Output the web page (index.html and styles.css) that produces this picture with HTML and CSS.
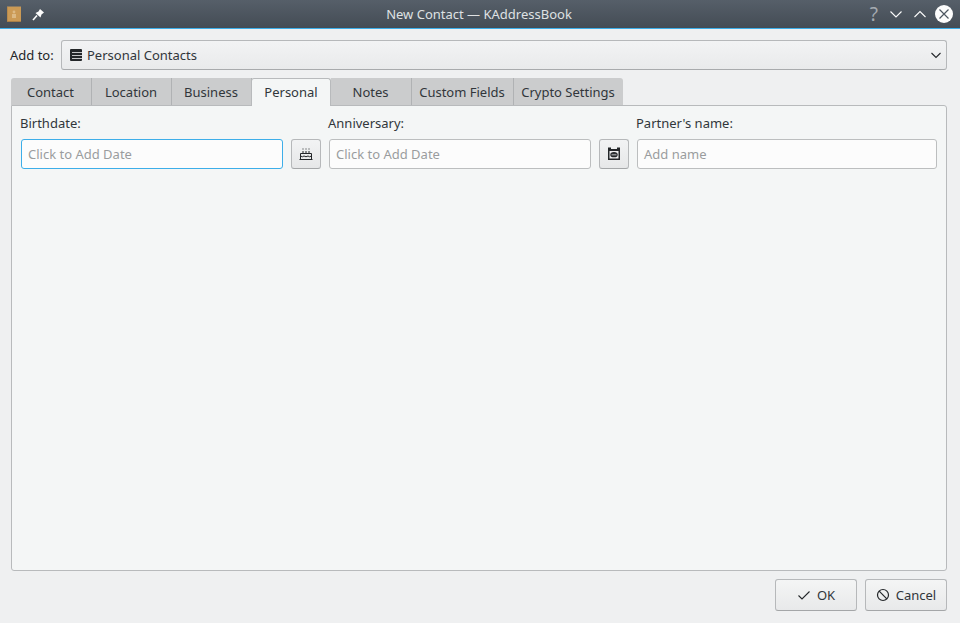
FILE: index.html
```html
<!DOCTYPE html>
<html lang="en">

<head>
    <meta charset="UTF-8">
    <title>New Contact — KAddressBook</title>
    <link rel="stylesheet" href="styles.css">
</head>

<body>
    <div class="window">
        <header class="titlebar">
            <div class="titlebar-left">
                <svg class="app-icon" width="14" height="16" viewBox="0 0 14 16">
                    <rect width="14" height="16" fill="#cb9a55" />
                    <rect x="0" y="0" width="14" height="1" fill="#8a7a62" />
                    <rect x="0" y="15" width="14" height="1" fill="#a87f48" />
                    <rect x="0" y="1" width="1" height="14" fill="#b98a4c" />
                    <circle cx="7" cy="6" r="1.4" fill="#dcb984" />
                    <rect x="5" y="8" width="4" height="4" fill="#dcb984" />
                </svg>
                <svg class="pin-icon" width="14" height="14" viewBox="0 0 14 14">
                    <path d="M9 1 L13 4.5 L10.5 6.5 L9.5 9.5 L4.5 5 L7.5 3.5 Z" fill="#fcfcfc" />
                    <path d="M6 7.5 L2 12" stroke="#fcfcfc" stroke-width="1.6" fill="none" />
                </svg>
            </div>
            <div class="titlebar-title">New Contact — KAddressBook</div>
            <div class="titlebar-buttons">
                <span class="help-mark">?</span>
                <svg width="14" height="14" viewBox="0 0 14 14">
                    <path d="M1.5 4.5 L7 10 L12.5 4.5" stroke="#fcfcfc" stroke-width="1.1" fill="none" />
                </svg>
                <svg width="14" height="14" viewBox="0 0 14 14">
                    <path d="M1.5 10 L7 4.5 L12.5 10" stroke="#fcfcfc" stroke-width="1.1" fill="none" />
                </svg>
                <svg class="close-icon" width="18" height="18" viewBox="0 0 18 18">
                    <circle cx="9" cy="9" r="9" fill="#fcfcfc" />
                    <path d="M4.5 4.5 L13.5 13.5 M13.5 4.5 L4.5 13.5" stroke="#4d5660" stroke-width="1.2" fill="none" />
                </svg>
            </div>
        </header>

        <main class="content">
            <div class="add-row">
                <span class="add-label">Add to:</span>
                <div class="combo">
                    <svg class="combo-icon" width="12" height="12" viewBox="0 0 12 12">
                        <rect width="12" height="12" rx="1" fill="#232629" />
                        <path d="M2 3.5 H12 M2 6.5 H12 M2 9.5 H12" stroke="#eff0f1" stroke-width="0.8" />
                    </svg>
                    <span class="combo-text">Personal Contacts</span>
                    <svg class="combo-arrow" width="12" height="12" viewBox="0 0 12 12">
                        <path d="M1.5 4 L6 8.5 L10.5 4" stroke="#232629" stroke-width="1.1" fill="none" />
                    </svg>
                </div>
            </div>

            <div class="tabs">
                <div class="tab tab-first">Contact</div>
                <div class="tab">Location</div>
                <div class="tab">Business</div>
                <div class="tab tab-active">Personal</div>
                <div class="tab tab-notes">Notes</div>
                <div class="tab tab-custom">Custom Fields</div>
                <div class="tab tab-last">Crypto Settings</div>
            </div>

            <div class="pane">
                <div class="field field-date">
                    <label>Birthdate:</label>
                    <div class="field-row">
                        <div class="input input-focus">Click to Add Date</div>
                        <button class="icon-button">
                            <svg width="14" height="14" viewBox="0 0 14 14">
                                <path d="M1.5 6.5 H12.5 V12.5 H1.5 Z M1.5 9 Q3.5 10.5 5 9 Q7 10.5 9 9 Q10.5 10.5 12.5 9" stroke="#232629" stroke-width="1" fill="none" />
                                <path d="M0.5 12.5 H13.5 M4 4 V6 M7 4 V6 M10 4 V6" stroke="#232629" stroke-width="1" fill="none" />
                                <path d="M4 1.5 V3 M7 1.5 V3 M10 1.5 V3" stroke="#232629" stroke-width="1" stroke-dasharray="1 1" fill="none" />
                            </svg>
                        </button>
                    </div>
                </div>
                <div class="field field-date">
                    <label>Anniversary:</label>
                    <div class="field-row">
                        <div class="input">Click to Add Date</div>
                        <button class="icon-button">
                            <svg width="14" height="14" viewBox="0 0 14 14">
                                <path d="M1 0.5 H4 V2 H10 V0.5 H13 V13 H1 Z" fill="#232629" />
                                <rect x="2.5" y="4" width="9" height="7.5" fill="#eff0f1" />
                                <ellipse cx="7" cy="7.7" rx="3.7" ry="2.6" fill="#232629" />
                                <rect x="4.5" y="6.9" width="5" height="1.6" fill="#8a8d90" />
                            </svg>
                        </button>
                    </div>
                </div>
                <div class="field field-name">
                    <label>Partner's name:</label>
                    <div class="input">Add name</div>
                </div>
            </div>

            <footer class="buttons">
                <button class="button">
                    <svg width="14" height="14" viewBox="0 0 14 14">
                        <path d="M1.5 7.5 L5 11 L12.5 3.5" stroke="#232629" stroke-width="1.1" fill="none" />
                    </svg>
                    OK
                </button>
                <button class="button">
                    <svg width="14" height="14" viewBox="0 0 14 14">
                        <circle cx="7" cy="7" r="5.5" stroke="#232629" stroke-width="1.2" fill="none" />
                        <path d="M3.2 3.2 L10.8 10.8" stroke="#232629" stroke-width="1.2" fill="none" />
                    </svg>
                    Cancel
                </button>
            </footer>
        </main>
    </div>
</body>

</html>
```

FILE: styles.css
```css
* {
    padding: 0;
    margin: 0;
    box-sizing: border-box;
    font-family: "Noto Sans", sans-serif;
}

body {
    background-color: #eff0f1;
    color: #31363b;
    font-size: 13px;
}

.window {
    display: flex;
    flex-direction: column;
    width: 960px;
    height: 623px;
    overflow: hidden;
}

.titlebar {
    display: flex;
    align-items: center;
    justify-content: space-between;
    height: 29px;
    flex-shrink: 0;
    padding: 0 7px;
    color: #fcfcfc;
    background: linear-gradient(#565f69, #444c55);
    border-bottom: 1px solid #3daee9;
}

.titlebar-left {
    display: flex;
    align-items: center;
    gap: 10px;
    width: 200px;
}

.pin-icon {
    margin-top: 1px;
}

.titlebar-title {
    flex: 1;
    text-align: center;
    font-size: 13px;
    color: #dfe1e3;
    padding-right: 2px;
}

.titlebar-buttons {
    display: flex;
    align-items: center;
    justify-content: flex-end;
    gap: 10px;
    width: 200px;
}

.help-mark {
    font-size: 19px;
    line-height: 18px;
    color: #a5abb1;
    margin-right: 1px;
}

.close-icon {
    margin-left: -2px;
}

.content {
    display: flex;
    flex-direction: column;
    flex: 1;
    padding: 11px 13px 12px 11px;
}

.add-row {
    display: flex;
    align-items: center;
    height: 30px;
    margin-left: -1px;
}

.add-label {
    width: 51px;
    color: #232629;
}

.combo {
    display: flex;
    align-items: center;
    flex: 1;
    height: 30px;
    padding: 0 4px 0 8px;
    color: #31363b;
    background: linear-gradient(#f2f3f4, #e9eaeb);
    border: 1px solid #b6b8ba;
    border-bottom-color: #a8aaac;
    border-radius: 3px;
}

.combo-icon {
    margin-right: 5px;
}

.combo-text {
    flex: 1;
}

.tabs {
    display: flex;
    height: 28px;
    margin-top: 8px;
    position: relative;
    z-index: 1;
}

.tab {
    display: flex;
    align-items: center;
    justify-content: center;
    width: 80px;
    height: 27px;
    padding-right: 1px;
    color: #31363b;
    background-color: #cbcccd;
    border-right: 1px solid #b0b2b4;
}

.tab-first {
    width: 81px;
    border-top-left-radius: 3px;
}

.tab-active {
    height: 28px;
    margin-left: -1px;
    padding: 0 0 1px;
    background-color: #f4f6f6;
    border: 1px solid #b8babc;
    border-bottom: none;
    border-radius: 3px 3px 0 0;
}

.tab-notes {
    width: 81px;
}

.tab-custom {
    width: 102px;
}

.tab-last {
    width: 109px;
    border-right: none;
    border-top-right-radius: 3px;
}

.pane {
    display: flex;
    flex: 1;
    gap: 7px;
    margin-top: -1px;
    padding: 7px 9px 0 8px;
    background-color: #f4f6f6;
    border: 1px solid #b8babc;
    border-radius: 0 3px 3px 3px;
}

.field label {
    display: block;
    height: 26px;
    line-height: 20px;
    color: #31363b;
}

.field-date {
    width: 301px;
}

.field-name {
    flex: 1;
}

.field-row {
    display: flex;
    gap: 8px;
}

.input {
    display: flex;
    align-items: center;
    flex: 1;
    height: 30px;
    margin-left: 1px;
    padding-left: 6px;
    color: #9a9c9e;
    background-color: #fcfcfc;
    border: 1px solid #bcbebf;
    border-radius: 3px;
}

.input-focus {
    border-color: #3daee9;
}

.icon-button {
    display: flex;
    align-items: center;
    justify-content: center;
    width: 30px;
    height: 30px;
    background: linear-gradient(#f2f3f4, #e6e7e8);
    border: 1px solid #b6b8ba;
    border-bottom-color: #a4a6a8;
    border-radius: 3px;
}

.buttons {
    display: flex;
    justify-content: flex-end;
    gap: 8px;
    margin-top: 8px;
}

.button {
    display: flex;
    align-items: center;
    justify-content: center;
    gap: 6px;
    width: 82px;
    height: 32px;
    font-size: 13px;
    color: #31363b;
    background: linear-gradient(#f4f5f5, #e8e9ea);
    border: 1px solid #b6b8ba;
    border-bottom-color: #a4a6a8;
    border-radius: 3px;
}
```
